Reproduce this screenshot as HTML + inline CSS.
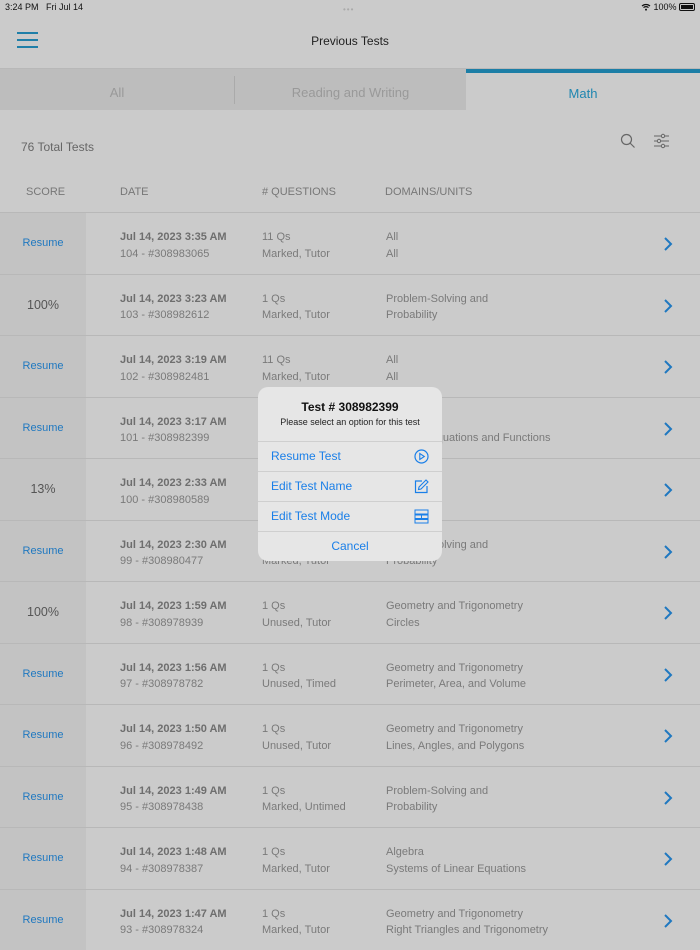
<!DOCTYPE html>
<html><head><meta charset="utf-8"><style>
*{margin:0;padding:0;box-sizing:border-box}
body{width:700px;height:934px;overflow:hidden;background:#cbcbcb;font-family:"Liberation Sans",sans-serif;position:relative;color:#6a6a6a}
.abs{position:absolute}
.status{font-size:9px;color:#111;top:2px}
.tabs{top:69px;left:0;width:700px;height:41px}
.tab{position:absolute;top:0;height:41px;font-size:13px;line-height:48px;text-align:center}
.row{position:absolute;left:0;width:700px;height:61.5px;border-top:1px solid #b8b8b8}
.sc{position:absolute;left:0;top:0;width:86px;height:100%;background:#c3c3c3;text-align:center;line-height:60px;font-size:11px;color:#1f78c0}
.sc.p{font-size:12.5px;color:#555}
.d{position:absolute;left:120px;top:16px;font-size:11px;line-height:16.5px;color:#7a7a7a}
.d b{color:#6e6e6e}
.q{position:absolute;left:262px;top:16px;font-size:11px;line-height:16.5px;color:#7a7a7a}
.m{position:absolute;left:386px;top:16px;font-size:11px;line-height:16.5px;color:#7a7a7a}
.ch{position:absolute;left:663px;top:24px}
.dlg{left:258px;top:387px;width:184px;height:174px;background:#e6e6e6;border-radius:10px;overflow:hidden}
.opt{position:absolute;left:0;width:184px;height:30px;border-top:1px solid #cfcfcf;font-size:12px;color:#1a7fe8;line-height:29px;padding-left:13px}
</style></head><body>
<div class="abs status" style="left:5px">3:24 PM&nbsp;&nbsp; Fri Jul 14</div>
<div class="abs" style="left:343px;top:5px;font-size:8px;color:#aaa;letter-spacing:1px">•••</div>
<div class="abs status" style="left:641px">
<svg width="10" height="8" viewBox="0 0 10 8" style="vertical-align:-1px"><path d="M1 3a6 6 0 0 1 8 0M2.5 4.6a3.8 3.8 0 0 1 5 0" stroke="#111" stroke-width="1.2" fill="none"/><circle cx="5" cy="6.6" r="1" fill="#111"/></svg> 100%</div>
<div class="abs" style="left:679px;top:3px;width:16px;height:8px;border:1px solid #111;border-radius:2px;padding:1px"><div style="background:#111;width:100%;height:100%"></div></div>
<div class="abs" style="left:17px;top:32px;width:21px">
<div style="height:2px;background:#1f7fa8;margin-bottom:5px"></div><div style="height:2px;background:#1f7fa8;margin-bottom:5px"></div><div style="height:2px;background:#1f7fa8"></div></div>
<div class="abs" style="left:0;width:700px;top:34px;text-align:center;font-size:12px;color:#222">Previous Tests</div>
<div class="abs" style="left:0;top:68px;width:700px;height:1px;background:#b8b8b8"></div>
<div class="abs tabs">
<div class="tab" style="left:0;width:466px;background:#bdbdbd"></div>
<div class="tab" style="left:0;width:234px;color:#999">All</div>
<div class="tab" style="left:234px;width:232px;color:#999;border-left:1px solid #aaa;top:7px;height:28px;line-height:34px">Reading and Writing</div>
<div class="tab" style="left:466px;width:234px;color:#1f86b0;border-top:4px solid #1c7ea6;line-height:42px">Math</div>
</div>
<div class="abs" style="left:21px;top:140px;font-size:12px;color:#666">76 Total Tests</div>
<svg class="abs" style="left:620px;top:133px" width="16" height="16" viewBox="0 0 16 16"><circle cx="6.5" cy="6.5" r="5" fill="none" stroke="#666" stroke-width="1.2"/><path d="M10 10l4.5 4.5" stroke="#666" stroke-width="1.2"/></svg>
<svg class="abs" style="left:653px;top:133px" width="17" height="16" viewBox="0 0 17 16"><path d="M1 3h15M1 8h15M1 13h15" stroke="#666" stroke-width="1"/><circle cx="10" cy="3" r="1.7" fill="#cbcbcb" stroke="#666"/><circle cx="6" cy="8" r="1.7" fill="#cbcbcb" stroke="#666"/><circle cx="10" cy="13" r="1.7" fill="#cbcbcb" stroke="#666"/></svg>
<div class="abs" style="top:186px;left:26px;font-size:11px;color:#777">SCORE</div>
<div class="abs" style="top:186px;left:120px;font-size:11px;color:#777">DATE</div>
<div class="abs" style="top:186px;left:262px;font-size:11px;color:#777"># QUESTIONS</div>
<div class="abs" style="top:186px;left:385px;font-size:11px;color:#777">DOMAINS/UNITS</div>

<div class="row" style="top:212px"><div class="sc">Resume</div><div class="d"><b>Jul 14, 2023 3:35 AM</b><br>104 - #308983065</div><div class="q">11 Qs<br>Marked, Tutor</div><div class="m">All<br>All</div><svg class="ch" width="10" height="14"><path d="M2 1l6 6-6 6" stroke="#1f78c0" stroke-width="2" fill="none"/></svg></div>
<div class="row" style="top:273.5px"><div class="sc p">100%</div><div class="d"><b>Jul 14, 2023 3:23 AM</b><br>103 - #308982612</div><div class="q">1 Qs<br>Marked, Tutor</div><div class="m">Problem-Solving and<br>Probability</div><svg class="ch" width="10" height="14"><path d="M2 1l6 6-6 6" stroke="#1f78c0" stroke-width="2" fill="none"/></svg></div>
<div class="row" style="top:335px"><div class="sc">Resume</div><div class="d"><b>Jul 14, 2023 3:19 AM</b><br>102 - #308982481</div><div class="q">11 Qs<br>Marked, Tutor</div><div class="m">All<br>All</div><svg class="ch" width="10" height="14"><path d="M2 1l6 6-6 6" stroke="#1f78c0" stroke-width="2" fill="none"/></svg></div>
<div class="row" style="top:396.5px"><div class="sc">Resume</div><div class="d"><b>Jul 14, 2023 3:17 AM</b><br>101 - #308982399</div><div class="q">1 Qs<br>Marked, Tutor</div><div class="m">Algebra<br>Rational Equations and Functions</div><svg class="ch" width="10" height="14"><path d="M2 1l6 6-6 6" stroke="#1f78c0" stroke-width="2" fill="none"/></svg></div>
<div class="row" style="top:458px"><div class="sc p">13%</div><div class="d"><b>Jul 14, 2023 2:33 AM</b><br>100 - #308980589</div><div class="q">1 Qs<br>Marked, Tutor</div><div class="m">All<br>All</div><svg class="ch" width="10" height="14"><path d="M2 1l6 6-6 6" stroke="#1f78c0" stroke-width="2" fill="none"/></svg></div>
<div class="row" style="top:519.5px"><div class="sc">Resume</div><div class="d"><b>Jul 14, 2023 2:30 AM</b><br>99 - #308980477</div><div class="q">1 Qs<br>Marked, Tutor</div><div class="m">Problem-Solving and<br>Probability</div><svg class="ch" width="10" height="14"><path d="M2 1l6 6-6 6" stroke="#1f78c0" stroke-width="2" fill="none"/></svg></div>
<div class="row" style="top:581px"><div class="sc p">100%</div><div class="d"><b>Jul 14, 2023 1:59 AM</b><br>98 - #308978939</div><div class="q">1 Qs<br>Unused, Tutor</div><div class="m">Geometry and Trigonometry<br>Circles</div><svg class="ch" width="10" height="14"><path d="M2 1l6 6-6 6" stroke="#1f78c0" stroke-width="2" fill="none"/></svg></div>
<div class="row" style="top:642.5px"><div class="sc">Resume</div><div class="d"><b>Jul 14, 2023 1:56 AM</b><br>97 - #308978782</div><div class="q">1 Qs<br>Unused, Timed</div><div class="m">Geometry and Trigonometry<br>Perimeter, Area, and Volume</div><svg class="ch" width="10" height="14"><path d="M2 1l6 6-6 6" stroke="#1f78c0" stroke-width="2" fill="none"/></svg></div>
<div class="row" style="top:704px"><div class="sc">Resume</div><div class="d"><b>Jul 14, 2023 1:50 AM</b><br>96 - #308978492</div><div class="q">1 Qs<br>Unused, Tutor</div><div class="m">Geometry and Trigonometry<br>Lines, Angles, and Polygons</div><svg class="ch" width="10" height="14"><path d="M2 1l6 6-6 6" stroke="#1f78c0" stroke-width="2" fill="none"/></svg></div>
<div class="row" style="top:765.5px"><div class="sc">Resume</div><div class="d"><b>Jul 14, 2023 1:49 AM</b><br>95 - #308978438</div><div class="q">1 Qs<br>Marked, Untimed</div><div class="m">Problem-Solving and<br>Probability</div><svg class="ch" width="10" height="14"><path d="M2 1l6 6-6 6" stroke="#1f78c0" stroke-width="2" fill="none"/></svg></div>
<div class="row" style="top:827px"><div class="sc">Resume</div><div class="d"><b>Jul 14, 2023 1:48 AM</b><br>94 - #308978387</div><div class="q">1 Qs<br>Marked, Tutor</div><div class="m">Algebra<br>Systems of Linear Equations</div><svg class="ch" width="10" height="14"><path d="M2 1l6 6-6 6" stroke="#1f78c0" stroke-width="2" fill="none"/></svg></div>
<div class="row" style="top:888.5px"><div class="sc">Resume</div><div class="d"><b>Jul 14, 2023 1:47 AM</b><br>93 - #308978324</div><div class="q">1 Qs<br>Marked, Tutor</div><div class="m">Geometry and Trigonometry<br>Right Triangles and Trigonometry</div><svg class="ch" width="10" height="14"><path d="M2 1l6 6-6 6" stroke="#1f78c0" stroke-width="2" fill="none"/></svg></div>

<div class="abs dlg">
<div class="abs" style="top:13px;width:184px;text-align:center;font-size:12px;font-weight:bold;color:#111">Test # 308982399</div>
<div class="abs" style="top:30px;width:184px;text-align:center;font-size:9px;color:#222">Please select an option for this test</div>
<div class="opt" style="top:54px">Resume Test<svg class="abs" style="right:13px;top:7px" width="15" height="15" viewBox="0 0 15 15"><circle cx="7.5" cy="7.5" r="6.5" fill="none" stroke="#1a7fe8" stroke-width="1.2"/><path d="M5.8 4.5v6l4.5-3z" fill="none" stroke="#1a7fe8" stroke-width="1.1"/></svg></div>
<div class="opt" style="top:84px">Edit Test Name<svg class="abs" style="right:13px;top:7px" width="15" height="15" viewBox="0 0 15 15"><path d="M8 2H1.5v11.5H13V7" fill="none" stroke="#1a7fe8" stroke-width="1.2"/><path d="M12 1l2 2-7 7-2.5.5.5-2.5z" fill="none" stroke="#1a7fe8" stroke-width="1.1"/></svg></div>
<div class="opt" style="top:114px">Edit Test Mode<svg class="abs" style="right:13px;top:7px" width="15" height="15" viewBox="0 0 15 15"><rect x="1" y="1" width="13" height="4" fill="none" stroke="#1a7fe8"/><rect x="1" y="6" width="13" height="3.5" fill="none" stroke="#1a7fe8"/><rect x="1" y="10.5" width="13" height="3.5" fill="none" stroke="#1a7fe8"/><path d="M7.5 6v3.5" stroke="#1a7fe8"/></svg></div>
<div class="opt" style="top:144px;text-align:center;padding-left:0">Cancel</div>
</div>
</body></html>
